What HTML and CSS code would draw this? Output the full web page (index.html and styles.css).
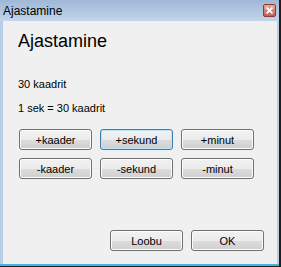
FILE: index.html
```html
<!DOCTYPE html>
<html lang="et">
<head>
    <meta charset="UTF-8">
    <title>Ajastamine</title>
    <link rel="stylesheet" href="styles.css">
</head>
<body>

<div class="window">
    <div class="titlebar">
        <span class="title">Ajastamine</span>
        <span class="close">
            <svg width="7" height="7" viewBox="0 0 7 7"><path d="M0.5 0.5 L6.5 6.5 M6.5 0.5 L0.5 6.5" stroke="#fff" stroke-width="1.8"/></svg>
        </span>
    </div>
    <div class="client">
        <h1>Ajastamine</h1>
        <p class="info first">30 kaadrit</p>
        <p class="info">1 sek = 30 kaadrit</p>

        <!-- nupud ajastamiseks -->
        <div class="grid">
            <button class="btn">+kaader</button>
            <button class="btn focus">+sekund</button>
            <button class="btn">+minut</button>
            <button class="btn">-kaader</button>
            <button class="btn">-sekund</button>
            <button class="btn">-minut</button>
        </div>

        <div class="actions">
            <button class="btn">Loobu</button>
            <button class="btn">OK</button>
        </div>
    </div>
</div>

</body>
</html>
```

FILE: styles.css
```css
body {
    margin: 0;
    background: #1e1e1e;
    font-family: "Liberation Sans", Arial, sans-serif;
}

.window {
    width: 279px;
    height: 264px;
    background: #b8cde6;
    border-bottom: 2px solid #41b6e3;
    display: flex;
    flex-direction: column;
}

.titlebar {
    height: 21px;
    display: flex;
    align-items: center;
    padding-left: 3px;
    background: linear-gradient(#9fb8d6, #c2d5eb);
}

.title {
    font-size: 12px;
    color: #000;
}

.close {
    margin-left: auto;
    margin-right: 3px;
    width: 11px;
    height: 11px;
    border: 1px solid #8c3a33;
    border-radius: 2px;
    background: linear-gradient(#e9ab98, #c65d4e);
    display: flex;
    align-items: center;
    justify-content: center;
}

.client {
    flex: 1;
    margin: 0 2px 0 3px;
    padding: 9px 13px 13px 15px;
    background: #f0f0f0;
    display: flex;
    flex-direction: column;
}

h1 {
    margin: 0;
    font-size: 18px;
    font-weight: normal;
    line-height: 22px;
    color: #000;
}

.info {
    margin: 11px 0 0;
    font-size: 11px;
    line-height: 13px;
    color: #000;
}

.info.first {
    margin-top: 26px;
}

.grid {
    margin: 14px 0 0 1px;
    display: grid;
    grid-template-columns: repeat(3, 73px);
    gap: 8px;
}

.btn {
    width: 73px;
    height: 21px;
    padding: 0;
    border: 1px solid #707070;
    border-radius: 3px;
    background: linear-gradient(#f2f2f2 0%, #ebebeb 50%, #dddddd 50%, #cfcfcf 100%);
    box-shadow: inset 0 0 0 1px #fcfcfc;
    font-family: "Liberation Sans", Arial, sans-serif;
    font-size: 11px;
    color: #000;
}

.btn.focus {
    border-color: #3c7fb1;
    box-shadow: inset 0 0 0 1px #b7e6fb;
}

.actions {
    margin-top: auto;
    display: flex;
    justify-content: flex-end;
    gap: 8px;
}
```
